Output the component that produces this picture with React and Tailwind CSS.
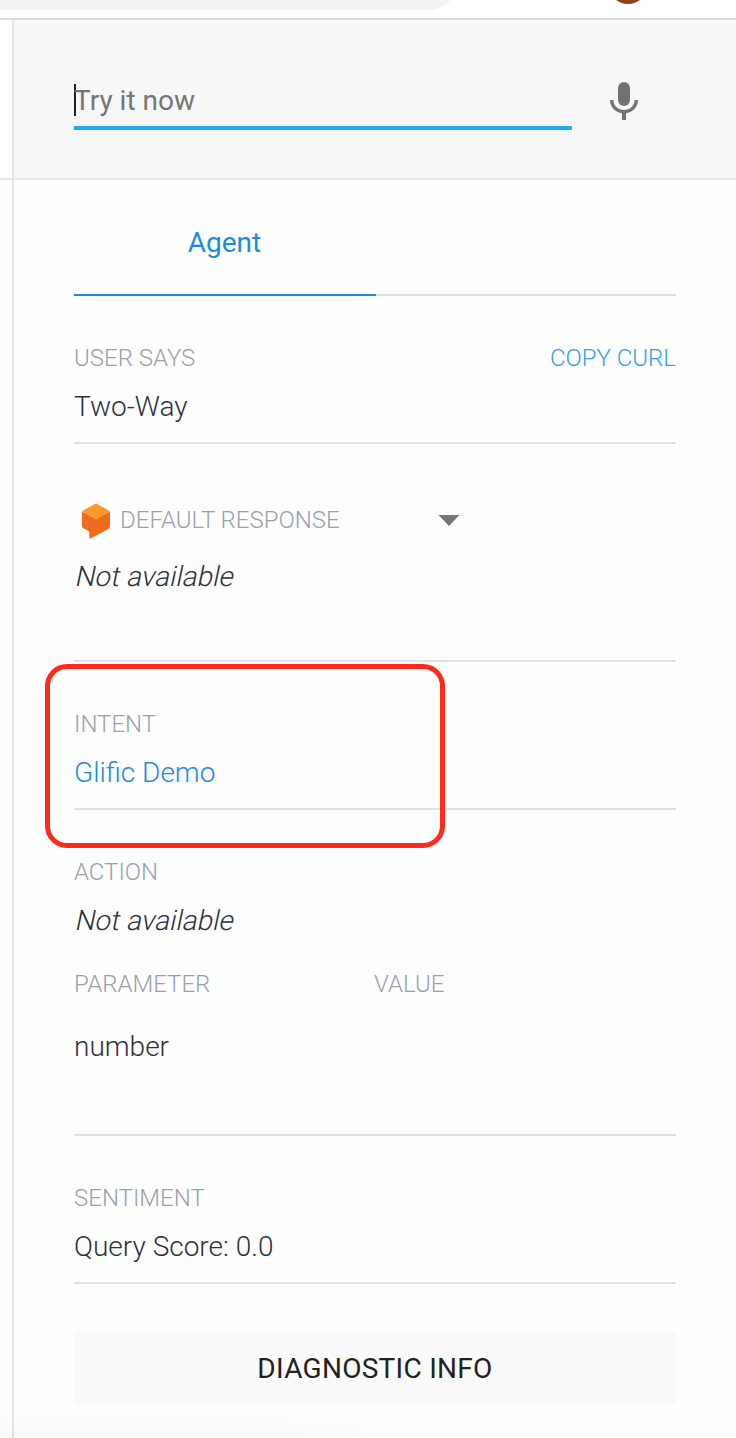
const label = 'block text-2xl leading-8 font-light text-[#9a9fae]';
const value = 'text-[28px] leading-8 font-light text-[#2b3040]';

function MicIcon() {
  return (
    <svg className="h-12 w-12 shrink-0" viewBox="0 0 48 48" fill="#737373">
      <rect x="18" y="5" width="12" height="24" rx="6" />
      <path d="M10 23h3.400c0 6 5 10 10.600 10s10.600-4 10.600-10H38c0 6.900-5.400 12.400-12 13.300V43h-4v-6.700C15.400 35.400 10 29.900 10 23z" />
    </svg>
  );
}

function DialogflowIcon() {
  return (
    <svg className="mt-0.5 h-9 w-[30px] shrink-0" viewBox="0 0 30 36">
      <path d="M1 8.500 L15 16 L29 8.500 V23 Q29 25 27.500 26 L10 35.200 Q8.300 36 8.300 34.200 V28.500 L2 25 Q1 24.300 1 23z" fill="#ef6c1f" />
      <path d="M1 8.300 L13.800 0.900 Q15 0.300 16.200 0.900 L29 8.300 L15 16.200z" fill="#ff9827" />
    </svg>
  );
}

function Unavailable() {
  return <span className="inline-block origin-[0_26px] -skew-x-12">Not available</span>;
}

function Section({ title, action, children }) {
  return (
    <section className="border-b-2 border-[#e0e0e0] pt-[46px] pb-[19px]">
      <div className="flex justify-between">
        <span className={label}>{title}</span>
        {action}
      </div>
      <div className={`mt-[17px] ${value}`}>{children}</div>
    </section>
  );
}

export default function App() {
  return (
    <div className="relative flex h-[1438px] w-[736px] flex-col overflow-hidden bg-[#fefefe] font-['Roboto',sans-serif]">
      <div className="flex h-5 shrink-0 items-start border-b-2 border-[#dadae0] bg-white">
        <div className="h-2.5 w-[457px] overflow-hidden">
          <div className="-mt-[46px] h-14 rounded-r-full bg-[#f1f3f4]" />
        </div>
        <div className="ml-[151px] h-1 w-10 overflow-hidden">
          <div className="-mt-9 h-10 w-10 rounded-full bg-[#8f451b]" />
        </div>
      </div>

      <div className="flex flex-1">
        <div className="w-3 shrink-0">
          <div className="h-40 border-b-2 border-[#e6e6e6] bg-white" />
        </div>
        <div className="relative flex-1 border-l-2 border-[#e6e6e6]">
          <header className="flex h-40 items-start border-b-2 border-[#e6e6e6] bg-[#f7f7f7] pl-[60px]">
            <div className="mt-16 flex h-[46px] w-[498px] border-b-4 border-[#22a9f4]">
              <div className="h-8 w-0.5 bg-[#212121]" />
              <span className="mt-px -ml-0.5 text-[28px] leading-8 text-[#757575]">Try it now</span>
            </div>
            <div className="mt-[57px] ml-[28px]">
              <MicIcon />
            </div>
          </header>

          <main className="mr-[60px] ml-[60px]">
            <div className="flex h-[116px]">
              <div className="w-[302px] border-b-2 border-[#1b8bdb] pt-[47px] pr-px text-center text-[28px] leading-8 text-[#1b8bdb]">
                Agent
              </div>
              <div className="flex-1 border-b-2 border-[#e0e0e0]" />
            </div>

            <Section
              title="USER SAYS"
              action={<span className="text-2xl leading-8 font-light text-[#35a0e6]">COPY CURL</span>}
            >
              Two-Way
            </Section>

            <section className="border-b-2 border-[#e0e0e0] pt-[60px] pb-[67px]">
              <div className="flex h-8 items-center pl-[7px]">
                <DialogflowIcon />
                <span className={`ml-[9px] w-[318px] ${label}`}>DEFAULT RESPONSE</span>
                <svg className="h-[11px] w-[22px]" viewBox="0 0 22 11">
                  <path d="M0.500 0h21L11 11z" fill="#757575" />
                </svg>
              </div>
              <div className={`mt-[25px] ${value}`}>
                <Unavailable />
              </div>
            </section>

            <Section title="INTENT">
              <span className="text-[#1b8bdb]">Glific Demo</span>
            </Section>

            <section className="border-b-2 border-[#e0e0e0] pt-[46px] pb-[71px]">
              <span className={label}>ACTION</span>
              <div className={`mt-[17px] ${value}`}>
                <Unavailable />
              </div>
              <div className="mt-[31px] flex">
                <span className={`w-[300px] ${label}`}>PARAMETER</span>
                <span className={label}>VALUE</span>
              </div>
              <div className={`mt-[31px] ${value}`}>number</div>
            </section>

            <Section title="SENTIMENT">Query Score: 0.0</Section>

            <button className="mt-12 block h-[72px] w-full rounded-sm bg-[#fafafa] pt-0.5 text-[28px] leading-8 tracking-[0.01em] text-[#212121]">
              DIAGNOSTIC INFO
            </button>
          </main>

          <div className="absolute top-[644px] left-[31px] h-[184px] w-[400px] rounded-[22px] border-5 border-[#ff2a1c]" />
        </div>
      </div>

      <div className="absolute bottom-0 left-0 h-7 w-[420px] bg-linear-to-t from-black/2 to-transparent mask-r-from-60%" />
    </div>
  );
}
